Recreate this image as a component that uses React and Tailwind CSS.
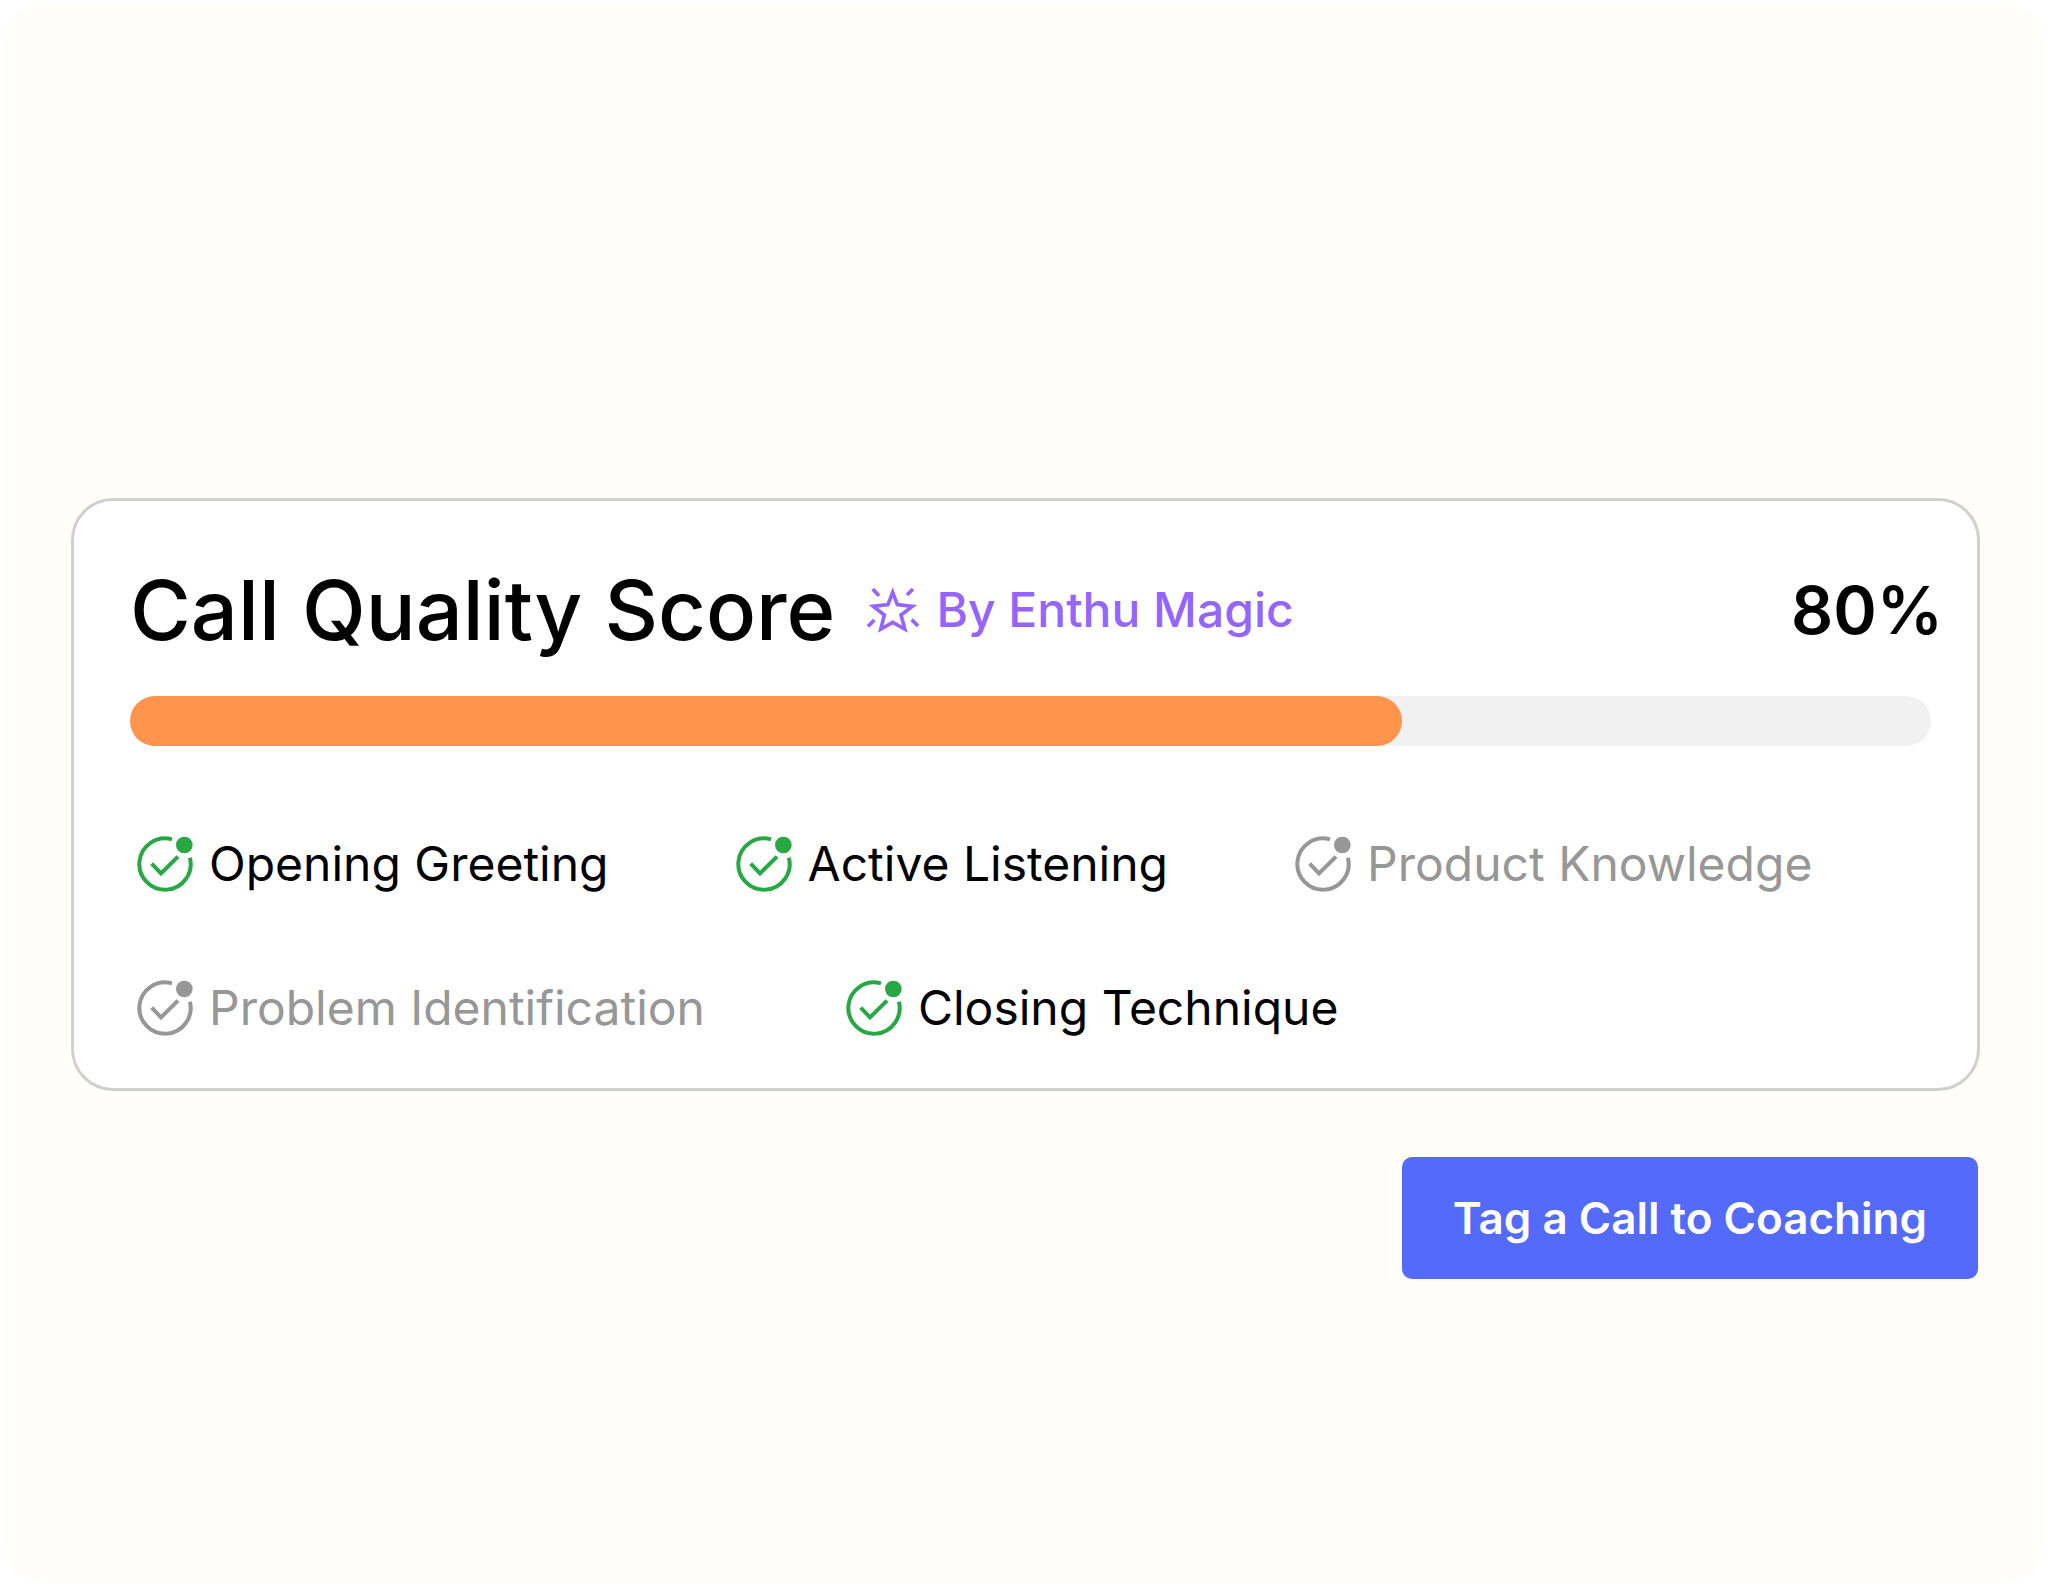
import React from 'react';
import clsx from 'clsx';

const SCORE_ROWS = [
  [
    { label: 'Opening Greeting', passed: true },
    { label: 'Active Listening', passed: true },
    { label: 'Product Knowledge', passed: false },
  ],
  [
    { label: 'Problem Identification', passed: false },
    { label: 'Closing Technique', passed: true },
  ],
];

function CheckBadge({ className }) {
  return (
    <svg viewBox="50 48 168 168" fill="none" stroke="currentColor" strokeWidth="12" className={className} aria-hidden="true">
      <path d="M155 58A77 77 0 1 0 208.6 113" />
      <path d="M94 131L122 160L173 110" />
      <circle cx="192" cy="75" r="25" fill="currentColor" stroke="none" />
    </svg>
  );
}

function MagicStar({ className }) {
  return (
    <svg viewBox="47 71 162 144" fill="none" stroke="currentColor" strokeWidth="11" strokeMiterlimit="10" className={className} aria-hidden="true">
      <path d="M127 90L141 127L186 132L152 158L163.500 200L127 180L91.500 200L102 158L69 132L113 127Z" />
      <path d="M67 80L86 100M188 80L170 98M53 192L72 173M184 172L203 191" />
    </svg>
  );
}

function ScoreItem({ label, passed }) {
  return (
    <li className="flex items-center gap-4">
      <CheckBadge className={clsx('size-14 shrink-0', passed ? 'text-[#28a745]' : 'text-[#979797]')} />
      <span className={clsx('text-5xl', passed ? 'text-black' : 'text-[#979797]')}>{label}</span>
    </li>
  );
}

export default function App() {
  return (
    <div className="min-h-screen bg-white p-0.5 font-['Inter',sans-serif]">
      <main className="flex min-h-[calc(100vh-4px)] flex-col rounded-[48px] bg-[#fffefa] pt-[496px] pr-[66px] pl-[69px]">
        <section className="rounded-[42px] border-[3px] border-[#d0d0ce] bg-white pt-[67px] pr-[34px] pb-[52px] pl-14">
          <div className="flex items-center whitespace-nowrap">
            <h1 className="text-[83px] leading-[84px] font-medium text-black">Call Quality Score</h1>
            <div className="ml-[31px] flex items-center gap-4 text-[#9566ff]">
              <MagicStar className="h-12 w-[54px]" />
              <span className="text-5xl font-medium">By Enthu Magic</span>
            </div>
            <span className="ml-auto text-[66px] leading-[84px] font-semibold text-black">80%</span>
          </div>

          <div className="mt-11 mr-3 h-[50px] rounded-full bg-[#f1f1f1]">
            <div className="h-full rounded-full bg-[#ff954c]" style={{ width: '70.6%' }} />
          </div>

          <div className="mt-[90px] flex flex-col gap-[88px] whitespace-nowrap pl-[7px]">
            {SCORE_ROWS.map((row, i) => (
              <ul key={i} className={clsx('flex', i === 0 ? 'gap-[127px]' : 'gap-[141px]')}>
                {row.map((item) => (
                  <ScoreItem key={item.label} {...item} />
                ))}
              </ul>
            ))}
          </div>
        </section>

        <button
          type="button"
          className="mt-[66px] mr-0.5 self-end rounded-[10px] bg-[#546afa] px-[51px] py-9 text-[44px] leading-[50px] font-semibold whitespace-nowrap text-white"
        >
          Tag a Call to Coaching
        </button>
      </main>
    </div>
  );
}
